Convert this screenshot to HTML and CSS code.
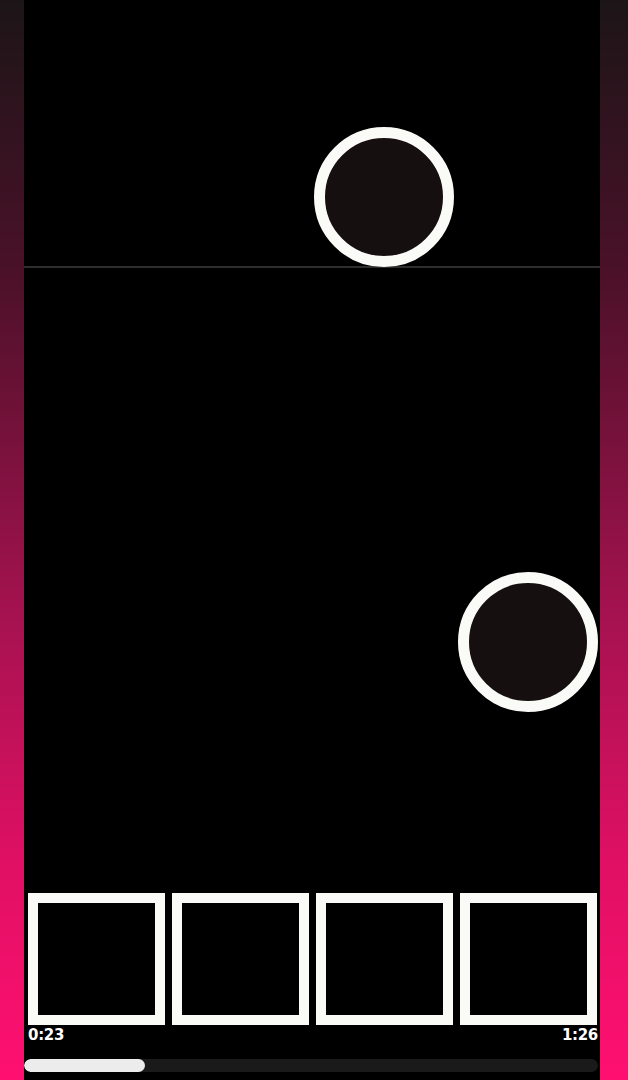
FILE: index.html
```html
<!DOCTYPE html>
<html>
<head>
<meta charset="utf-8">
<link rel="stylesheet" href="styles.css">
</head>
<body>
<div class="page">
  <main class="stage">
    <section class="top">
      <div class="node node-a"></div>
    </section>
    <section class="canvas">
      <div class="node node-b"></div>
    </section>
    <section class="timeline">
      <div class="frames">
        <div class="frame"></div>
        <div class="frame"></div>
        <div class="frame"></div>
        <div class="frame"></div>
      </div>
      <div class="times">
        <span>0:23</span>
        <span>1:26</span>
      </div>
      <div class="progress">
        <div class="progress-fill" style="width:121px"></div>
      </div>
    </section>
  </main>
</div>
</body>
</html>
```
FILE: styles.css
```css
html, body {
  margin: 0;
  padding: 0;
}
body {
  width: 628px;
  height: 1080px;
  overflow: hidden;
  background: linear-gradient(to bottom, #1c1517 0%, #4a1128 25%, #a0124d 55%, #e01064 80%, #ff1070 100%);
  font-family: "DejaVu Sans", "Liberation Sans", sans-serif;
}
.page {
  display: flex;
  padding-left: 24px;
  height: 1080px;
}
.stage {
  width: 576px;
  height: 1080px;
  background: #000;
  display: flex;
  flex-direction: column;
}
.top {
  position: relative;
  height: 268px;
  border-bottom: 2px solid #2e2e2e;
  box-sizing: border-box;
}
.node {
  position: absolute;
  width: 118px;
  height: 118px;
  border: 11px solid #fafaf7;
  border-radius: 50%;
  background: #150f0f;
}
.node-a {
  left: 290px;
  top: 127px;
}
.canvas {
  position: relative;
  height: 625px;
}
.node-b {
  left: 434px;
  top: 304px;
}
.timeline {
  display: flex;
  flex-direction: column;
  padding: 0 2px 0 0;
}
.frames {
  display: flex;
  gap: 7px;
  padding-left: 4px;
}
.frame {
  width: 117px;
  height: 112px;
  border: 10px solid #fafaf7;
  background: #000;
}
.times {
  display: flex;
  justify-content: space-between;
  padding: 1px 0 0 4px;
  height: 20px;
  color: #fff;
  font-weight: 700;
  font-size: 15px;
  line-height: 18px;
  letter-spacing: -0.3px;
}
.progress {
  margin-top: 13px;
  height: 13px;
  border-radius: 7px;
  background: #1a1a1a;
  overflow: hidden;
}
.progress-fill {
  height: 100%;
  background: #ececec;
  border-radius: 7px;
}
```
